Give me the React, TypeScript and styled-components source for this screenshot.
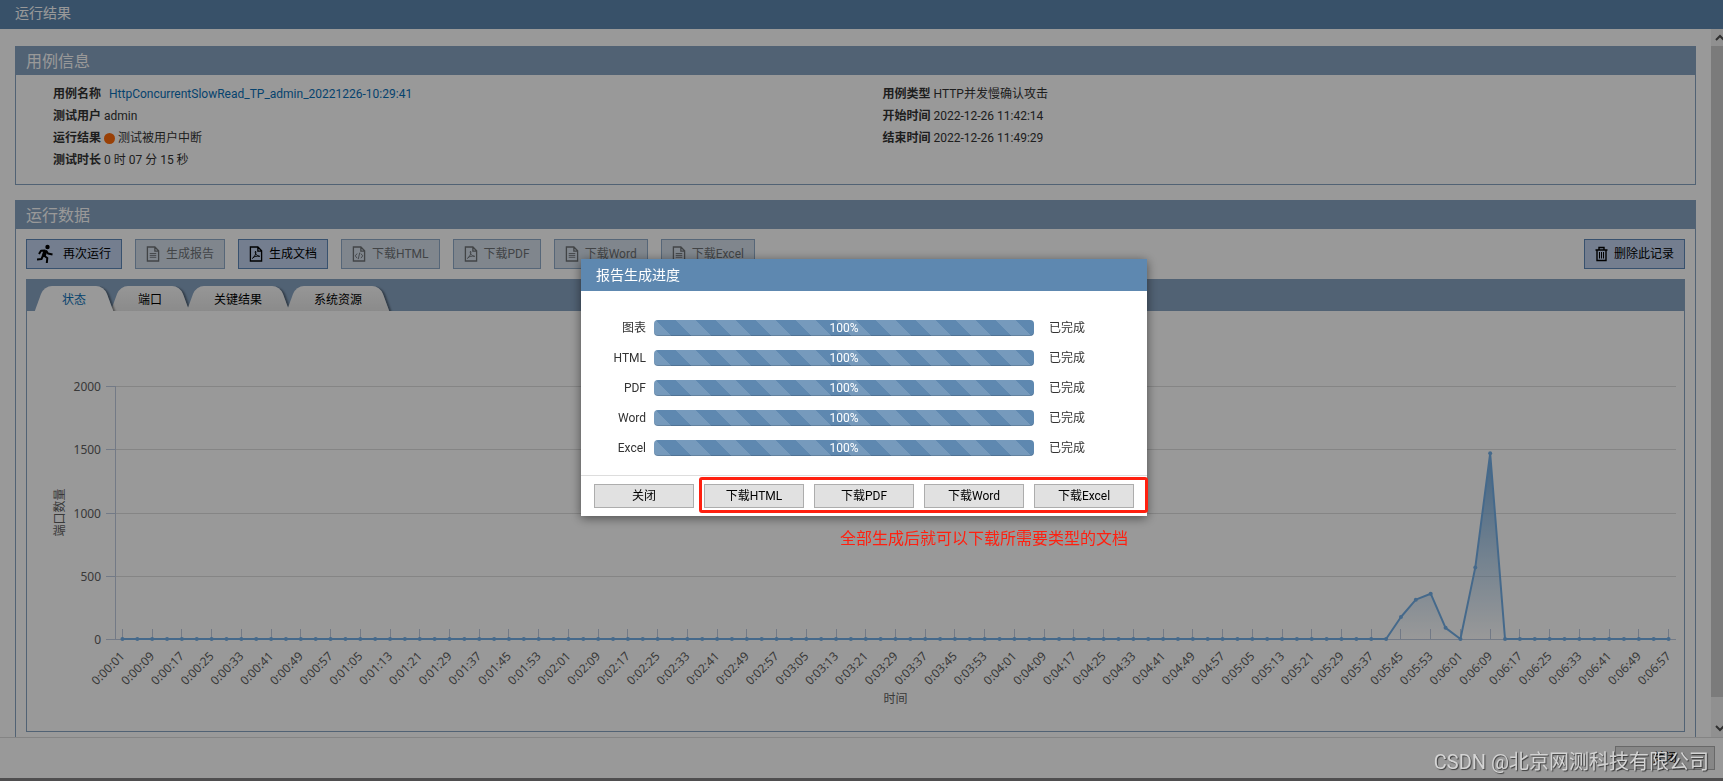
import React, { useLayoutEffect, useRef, useState } from "react";
import styled, { createGlobalStyle, css } from "styled-components";

const GlobalStyle = createGlobalStyle`
  * { box-sizing: border-box; }
  body {
    margin: 0;
    background: #fff;
    color: #333;
    font-family: Roboto, "Noto Sans CJK SC", sans-serif;
    font-size: 12px;
    line-height: 22px;
  }
  button { font: inherit; margin: 0; }
`;

const Page = styled.div`
  isolation: isolate;
  height: 100vh;
  display: flex;
  flex-direction: column;
  overflow: hidden;
  background: #848384;
  padding-bottom: 3px;
`;

const TitleBar = styled.header`
  flex: none;
  height: 29px;
  padding: 0 15px 3px;
  display: flex;
  align-items: center;
  background: #5e88b0;
  color: #fff;
  font-size: 14px;
`;

const Body = styled.div`
  flex: 1;
  min-height: 0;
  display: flex;
  background: #fff;
`;

const Main = styled.main`
  flex: 1;
  min-width: 0;
  overflow: hidden;
  padding: 17px 15px 0;
  display: flex;
  flex-direction: column;
  gap: 15px;
`;

const ScrollBar = styled.div`
  flex: none;
  width: 12px;
  overflow: hidden;
  display: flex;
  flex-direction: column;
  background: #f1f1f1;
`;

const ScrollArrow = styled.svg`
  flex: none;
  width: 17px;
  height: 17px;
  fill: none;
  stroke: #505050;
  stroke-width: 2;
`;

const ScrollThumb = styled.div`
  flex: 1;
  margin-bottom: 23px;
  background: #cdcdcd;
`;

const Panel = styled.section`
  flex: none;
  border: 1px solid #87a3c1;
  border-top: 0;
`;

const PanelTitle = styled.h2`
  margin: 0 -1px;
  height: 29px;
  padding: 2px 11px 0;
  display: flex;
  align-items: center;
  background: #87a3c1;
  color: #fff;
  font-size: 16px;
  font-weight: 400;
`;

const InfoGrid = styled.div`
  display: grid;
  grid-template-columns: 1fr 1fr;
  padding: 8px 10px 13px;
`;

const InfoColumn = styled.div`
  padding-left: 27px;
`;

const InfoRow = styled.div`
  height: 22px;
  display: flex;
  align-items: center;
  gap: 3px;
`;

const InfoLabel = styled.span`
  font-weight: 700;
`;

const InfoLink = styled.a`
  margin-left: 5px;
  color: #0a70b8;
  text-decoration: none;
`;

const StatusDot = styled.i`
  width: 11px;
  height: 11px;
  border-radius: 50%;
  background: #ff6c0a;
`;

const RunBody = styled.div`
  padding: 10px 10px 20px;
`;

const Toolbar = styled.div`
  display: flex;
  gap: 13px;
  margin-bottom: 10px;
`;

const ToolButton = styled.button<{ $end?: boolean }>`
  height: 30px;
  padding: 0 10px;
  display: flex;
  align-items: center;
  gap: 6px;
  border: 1px solid #5e88b8;
  background: #c1d2ee;
  color: #000;
  white-space: nowrap;
  ${(p) => p.$end && css`margin-left: auto;`}
  &:disabled {
    border-color: #8fabc8;
    background: #d5e0ec;
    color: #6e7276;
  }
`;

const Icon = styled.svg<{ $w: number }>`
  flex: none;
  width: ${(p) => p.$w}px;
  height: ${(p) => (p.$w > 16 ? 20 : 16)}px;
  fill: none;
  stroke: currentColor;
  stroke-width: 1;
`;

const TabBox = styled.div`
  border: 1px solid #87a3c1;
  border-top: 0;
`;

const TabBar = styled.div`
  height: 32px;
  margin: 0 -1px;
  padding: 7px 8px 0;
  display: flex;
  overflow: hidden;
  background: #87a3c1;
`;

const Tab = styled.button<{ $active?: boolean }>`
  position: relative;
  height: 25px;
  margin-right: -2px;
  padding: 2px 26px 0 28px;
  border: 0;
  background: none;
  color: ${(p) => (p.$active ? "#0a70b8" : "#000")};
  z-index: ${(p) => (p.$active ? 1 : 0)};
  &::before,
  &::after {
    content: "";
    position: absolute;
    z-index: -1;
    top: 0;
    bottom: -2px;
    background: linear-gradient(${(p) => (p.$active ? "#fff, #fff" : "#fbfbfb, #e6e6e6")});
  }
  &::before {
    left: 5px;
    width: 50%;
    transform: skewX(-20deg);
    border-radius: 8px 0 0 0;
  }
  &::after {
    right: 3px;
    width: 60%;
    transform: skewX(20deg);
    border-radius: 0 8px 0 0;
    box-shadow: 2px 1px 2px rgba(0, 0, 0, 0.4);
    clip-path: inset(0 -6px 0 0);
  }
`;

const ChartSvg = styled.svg`
  display: block;
  width: 100%;
  height: 420px;
  fill: #606060;
  font-family: "Noto Sans", "Noto Sans CJK SC", sans-serif;
  font-size: 12px;
`;

const Footer = styled.footer`
  flex: none;
  height: 41px;
  padding: 0 8px 0 0;
  display: flex;
  align-items: center;
  justify-content: flex-end;
  border-top: 1px solid #ddd;
  background: #fff;
`;

const PlainButton = styled.button`
  width: 100px;
  height: 24px;
  padding: 0;
  border: 1px solid #adadad;
  background: #e1e1e1;
  color: #000;
`;

const Overlay = styled.div`
  position: fixed;
  inset: 0;
  padding: 0 0 6px 5px;
  display: flex;
  align-items: center;
  justify-content: center;
  background: rgba(0, 0, 0, 0.4);
`;

const Dialog = styled.div`
  position: relative;
  width: 566px;
  background: #fff;
  box-shadow: 0 2px 10px rgba(0, 0, 0, 0.5);
`;

const DialogTitle = styled.h1`
  margin: 0;
  height: 32px;
  padding: 0 15px;
  display: flex;
  align-items: center;
  background: #5e88b0;
  color: #fff;
  font-size: 14px;
  font-weight: 400;
`;

const ProgressList = styled.div`
  padding: 22px 0 12px;
`;

const ProgressRow = styled.div`
  height: 30px;
  display: grid;
  grid-template-columns: 65px 380px 1fr;
  align-items: center;
  column-gap: 8px;
`;

const ProgressLabel = styled.span`
  text-align: right;
`;

const ProgressState = styled.span`
  padding-left: 7px;
`;

const ProgressBar = styled.div`
  height: 16px;
  border-radius: 4px;
  background: linear-gradient(
      45deg,
      rgba(255, 255, 255, 0.15) 25%,
      transparent 25%,
      transparent 50%,
      rgba(255, 255, 255, 0.15) 50%,
      rgba(255, 255, 255, 0.15) 75%,
      transparent 75%
    ) 22px 0 / 40px 40px,
    #5e88b0;
  box-shadow: inset 0 -1px 0 rgba(0, 0, 0, 0.15);
  color: #fff;
  line-height: 16px;
  text-align: center;
`;

const DialogFooter = styled.div`
  height: 41px;
  padding: 0 13px 0;
  display: flex;
  align-items: center;
  gap: 10px;
  border-top: 1px solid #ddd;
`;

const DownloadGroup = styled.div`
  position: relative;
  display: flex;
  gap: 10px;
  &::after {
    content: "";
    position: absolute;
    inset: -7px -14px -5px -5px;
    border: 3px solid #ff2010;
    border-radius: 3px;
    pointer-events: none;
  }
`;

const Note = styled.p`
  position: absolute;
  top: 100%;
  right: 19px;
  margin: 12px 0 0;
  color: #ff2010;
  font-size: 16px;
  white-space: nowrap;
`;

const Watermark = styled.div`
  position: fixed;
  right: 14px;
  bottom: 8px;
  color: #d4d4d4;
  font-size: 20px;
  text-shadow: 1px 1px 1px rgba(0, 0, 0, 0.6);
  pointer-events: none;
`;

const PageOutline = () => <path d="M1.5.5h8l4 4v11h-12zM9.500 1v4h4" strokeWidth="1.4" />;

const icons = {
  doc: (
    <Icon $w={14} viewBox="0 0 15 16">
      <PageOutline />
      <path d="M4 7.500h7M4 9.500h7M4 11.500h7" />
    </Icon>
  ),
  pdf: (
    <Icon $w={14} viewBox="0 0 15 16">
      <PageOutline />
      <path d="M7 5c-1 2 .5 4.500 4.500 5.500M7 5c1.200 2-1 6-3.500 8M4 12c2-1.500 4.500-2 7.500-1.500" />
    </Icon>
  ),
  html: (
    <Icon $w={14} viewBox="0 0 15 16">
      <PageOutline />
      <path d="M5.500 7.500l-2 2.500 2 2.500M9.500 7.500l2 2.500-2 2.500M8.300 6.500l-1.600 7" />
    </Icon>
  ),
  run: (
    <Icon $w={20} viewBox="1 0 20 20">
      <circle cx="11.500" cy="3" r="2.200" fill="currentColor" stroke="none" />
      <path
        d="M9.500 6.500L7.500 12M9.500 6.500L5 6.800 3 10M10 6.500l2 3 4.500 1M7.800 11.500l3.500 2.500-.5 5M7 11.500L5.500 15l-4.500.5"
        strokeWidth="2"
        strokeLinejoin="round"
      />
      <path d="M9.500 6.500L7.700 12" strokeWidth="4" />
    </Icon>
  ),
  trash: (
    <Icon $w={13} viewBox="0 0 13 16">
      <path d="M.5 4h12M4 3.500v-2h5v2M2 4v10.500h9V4" strokeWidth="1.400" />
      <path d="M4.500 6v6.500M6.500 6v6.500M8.500 6v6.500" />
    </Icon>
  ),
};

const tools: { label: string; icon: keyof typeof icons; disabled?: boolean }[] = [
  { label: "再次运行", icon: "run" },
  { label: "生成报告", icon: "doc", disabled: true },
  { label: "生成文档", icon: "pdf" },
  { label: "下载HTML", icon: "html", disabled: true },
  { label: "下载PDF", icon: "pdf", disabled: true },
  { label: "下载Word", icon: "doc", disabled: true },
  { label: "下载Excel", icon: "doc", disabled: true },
];

const tabs = ["状态", "端口", "关键结果", "系统资源"];
const jobs = ["图表", "HTML", "PDF", "Word", "Excel"];
const downloads = ["下载HTML", "下载PDF", "下载Word", "下载Excel"];

const POINTS = 105;
const peaks: Record<number, number> = { 86: 174, 87: 311, 88: 358, 89: 88, 91: 566, 92: 1468 };

function timeLabel(i: number) {
  const s = 1 + i * 4;
  const two = (n: number) => String(n).padStart(2, "0");
  return `0:${two(Math.floor(s / 60))}:${two(s % 60)}`;
}

function Chart() {
  const ref = useRef<SVGSVGElement>(null);
  const [width, setWidth] = useState(1657);
  useLayoutEffect(() => {
    const el = ref.current!;
    const observer = new ResizeObserver(() => setWidth(el.clientWidth || el.getBoundingClientRect().width));
    observer.observe(el);
    return () => observer.disconnect();
  }, []);

  const left = 88;
  const right = width - 8;
  const top = 75;
  const bottom = 328;
  const x = (i: number) => left + ((i + 0.5) * (right - left)) / POINTS;
  const y = (v: number) => bottom - (v * (bottom - top)) / 2000;
  const pts = Array.from({ length: POINTS }, (_, i) => [x(i), y(peaks[i] || 0)]);
  const line = pts.map((p) => p.join(",")).join(" ");

  return (
    <ChartSvg ref={ref} role="img" aria-label="端口数量">
      <defs>
        <linearGradient id="area" gradientUnits="userSpaceOnUse" x1="0" x2="0" y1={y(1468)} y2={bottom}>
          <stop offset="0" stopColor="#6fa8dc" />
          <stop offset="1" stopColor="#6fa8dc" stopOpacity="0" />
        </linearGradient>
      </defs>
      {[0, 500, 1000, 1500, 2000].map((v) => {
        const gy = Math.round(y(v)) + 0.5;
        return (
          <g key={v}>
            <path d={`M${left} ${gy}H${right}`} stroke={v ? "#dedede" : "#c0cbe0"} />
            <path d={`M${left - 9} ${gy}h9`} stroke="#c0cbe0" />
            <text x={left - 14} y={gy + 4} textAnchor="end">{v}</text>
          </g>
        );
      })}
      <path d={`M${left + 0.5} ${top}V${bottom}`} stroke="#c0cbe0" />
      {pts.map(([px], i) =>
        i % 2 ? null : (
          <g key={i}>
            <path d={`M${Math.floor(px) + 0.5} ${bottom - 10}v10`} stroke="#c0cbe0" />
            <text textAnchor="end" transform={`translate(${px + 3} ${bottom + 18}) rotate(-45)`}>
              {timeLabel(i)}
            </text>
          </g>
        )
      )}
      <polygon points={`${pts[0][0]},${bottom} ${line} ${pts[POINTS - 1][0]},${bottom}`} fill="url(#area)" />
      <polyline points={line} fill="none" stroke="#74b0e8" strokeWidth="2" strokeLinejoin="round" />
      {pts.map(([px, py], i) => (
        <circle key={i} cx={px} cy={py} r="2" fill="#74b0e8" />
      ))}
      <text x={(left + right) / 2} y="392" textAnchor="middle">时间</text>
      <text textAnchor="middle" transform={`translate(37 ${(top + bottom) / 2}) rotate(-90)`}>端口数量</text>
    </ChartSvg>
  );
}

export default function App() {
  return (
    <>
      <GlobalStyle />
      <Page>
        <TitleBar>运行结果</TitleBar>
        <Body>
          <Main>
            <Panel>
              <PanelTitle>用例信息</PanelTitle>
              <InfoGrid>
                <InfoColumn>
                  <InfoRow>
                    <InfoLabel>用例名称</InfoLabel>
                    <InfoLink href="#case">HttpConcurrentSlowRead_TP_admin_20221226-10:29:41</InfoLink>
                  </InfoRow>
                  <InfoRow><InfoLabel>测试用户</InfoLabel>admin</InfoRow>
                  <InfoRow><InfoLabel>运行结果</InfoLabel><StatusDot />测试被用户中断</InfoRow>
                  <InfoRow><InfoLabel>测试时长</InfoLabel>0 时 07 分 15 秒</InfoRow>
                </InfoColumn>
                <InfoColumn>
                  <InfoRow><InfoLabel>用例类型</InfoLabel>HTTP并发慢确认攻击</InfoRow>
                  <InfoRow><InfoLabel>开始时间</InfoLabel>2022-12-26 11:42:14</InfoRow>
                  <InfoRow><InfoLabel>结束时间</InfoLabel>2022-12-26 11:49:29</InfoRow>
                </InfoColumn>
              </InfoGrid>
            </Panel>
            <Panel>
              <PanelTitle>运行数据</PanelTitle>
              <RunBody>
                <Toolbar>
                  {tools.map((t) => (
                    <ToolButton key={t.label} type="button" disabled={t.disabled}>
                      {icons[t.icon]}
                      {t.label}
                    </ToolButton>
                  ))}
                  <ToolButton type="button" $end>
                    {icons.trash}
                    删除此记录
                  </ToolButton>
                </Toolbar>
                <TabBox>
                  <TabBar role="tablist">
                    {tabs.map((t, i) => (
                      <Tab key={t} type="button" role="tab" aria-selected={i === 0} $active={i === 0}>
                        {t}
                      </Tab>
                    ))}
                  </TabBar>
                  <Chart />
                </TabBox>
              </RunBody>
            </Panel>
          </Main>
          <ScrollBar>
            <ScrollArrow viewBox="0 0 17 17"><path d="M5 11l4-4 4 4" /></ScrollArrow>
            <ScrollThumb />
            <ScrollArrow viewBox="0 0 17 17"><path d="M5 6l4 4 4-4" /></ScrollArrow>
          </ScrollBar>
        </Body>
        <Footer><PlainButton type="button">关闭</PlainButton></Footer>
      </Page>
      <Overlay>
        <Dialog role="dialog" aria-labelledby="progress-title">
          <DialogTitle id="progress-title">报告生成进度</DialogTitle>
          <ProgressList>
            {jobs.map((j) => (
              <ProgressRow key={j}>
                <ProgressLabel>{j}</ProgressLabel>
                <ProgressBar role="progressbar" aria-label={j} aria-valuenow={100}>100%</ProgressBar>
                <ProgressState>已完成</ProgressState>
              </ProgressRow>
            ))}
          </ProgressList>
          <DialogFooter>
            <PlainButton type="button">关闭</PlainButton>
            <DownloadGroup>
              {downloads.map((d) => (
                <PlainButton key={d} type="button">{d}</PlainButton>
              ))}
            </DownloadGroup>
          </DialogFooter>
          <Note>全部生成后就可以下载所需要类型的文档</Note>
        </Dialog>
      </Overlay>
      <Watermark>CSDN @北京网测科技有限公司</Watermark>
    </>
  );
}
